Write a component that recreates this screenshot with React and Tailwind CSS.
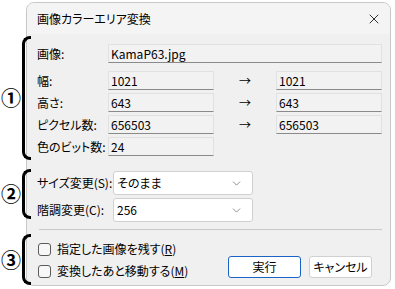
import { ChevronDown, X } from "lucide-react";

const font = { fontFamily: '"Noto Sans CJK JP", "Noto Sans", sans-serif' };

function Field({ value, className = "" }) {
  return (
    <div
      className={`h-[19px] border border-[#e1e1e1] border-b-[#8a8a8a] bg-[#f2f2f2] px-[2px] text-[12px] leading-[17px] text-black ${className}`}
    >
      {value}
    </div>
  );
}

function Select({ value }) {
  return (
    <div className="flex h-[24px] w-[140px] items-center justify-between rounded-[3px] border border-[#d0d0d0] bg-white pl-[3px] pr-[9px] text-[12px]">
      <span>{value}</span>
      <ChevronDown size={13} strokeWidth={1.2} className="text-[#555]" />
    </div>
  );
}

function Bracket({ top, height, num }) {
  return (
    <>
      <div
        className="absolute left-[22px] w-[9px] rounded-l-[8px] border-y-[3px] border-l-[3px] border-black"
        style={{ top, height, borderRightWidth: 0 }}
      />
      <div
        className="absolute left-[0px] flex w-[22px] items-center justify-center text-[20px] font-bold text-black"
        style={{ top: top + height / 2 - 14, height: 28 }}
      >
        {num}
      </div>
    </>
  );
}

function CheckRow({ label, k }) {
  return (
    <div className="flex h-[18px] items-center gap-[6px] whitespace-nowrap text-[12px]">
      <div className="h-[13px] w-[13px] rounded-[3px] border border-[#5a5a5a] bg-[#f7f7f7]" />
      <span>
        {label}(<span className="underline">{k}</span>)
      </span>
    </div>
  );
}

export default function App() {
  return (
    <div
      className="relative h-[289px] w-[395px] bg-white text-black [font-feature-settings:'palt']"
      style={font}
    >
      <div className="ml-[26px] mt-[2px] flex h-[284px] w-[365px] flex-col overflow-hidden rounded-[8px] border border-[#c8c8c8] bg-[#f0f0f0]">
        <div className="flex h-[31px] shrink-0 items-center justify-between bg-[#f4f4f4] pl-[10px] pr-[8px] text-[12px]">
          <span>画像カラーエリア変換</span>
          <X size={16} strokeWidth={1.2} />
        </div>
        <div className="flex flex-col whitespace-nowrap pl-[10px] pr-[8px] pt-[10px] text-[12px]">
          <div className="flex h-[19px] items-center">
            <span className="w-[71px]">画像:</span>
            <Field value="KamaP63.jpg" className="flex-1" />
          </div>
          <div className="mt-[8px] flex flex-col gap-[3px]">
            {[
              ["幅:", "1021", "1021"],
              ["高さ:", "643", "643"],
              ["ピクセル数:", "656503", "656503"],
              ["色のビット数:", "24", null],
            ].map(([l, a, b]) => (
              <div key={l} className="flex h-[19px] items-center">
                <span className="w-[71px]">{l}</span>
                <Field value={a} className="w-[106px]" />
                {b !== null && (
                  <>
                    <span className="w-[62px] text-center">→</span>
                    <Field value={b} className="w-[106px]" />
                  </>
                )}
              </div>
            ))}
          </div>
          <div className="mt-[15px] flex flex-col gap-[3px]">
            <div className="flex items-center">
              <span className="w-[76px]">サイズ変更(S):</span>
              <Select value="そのまま" />
            </div>
            <div className="flex items-center">
              <span className="w-[76px]">階調変更(C):</span>
              <Select value="256" />
            </div>
          </div>
          <div className="ml-[2px] mt-[7px] h-px bg-[#c9c9c9]" />
          <div className="mt-[10px] flex items-end justify-between pr-[10px]">
            <div className="flex flex-col gap-[4px] pl-[1px]">
              <CheckRow label="指定した画像を残す" k="R" />
              <CheckRow label="変換したあと移動する" k="M" />
            </div>
            <div className="mb-[2px] flex gap-[8px]">
              <div className="flex h-[22px] w-[73px] items-center justify-center rounded-[3px] border-[1.5px] border-[#1a64c8] bg-white">
                実行
              </div>
              <div className="flex h-[22px] w-[63px] items-center justify-center rounded-[3px] border border-[#d0d0d0] bg-white">
                キャンセル
              </div>
            </div>
          </div>
        </div>
      </div>
      <Bracket top={34} height={124} num="①" />
      <Bracket top={167} height={50} num="②" />
      <Bracket top={232} height={51} num="③" />
    </div>
  );
}
